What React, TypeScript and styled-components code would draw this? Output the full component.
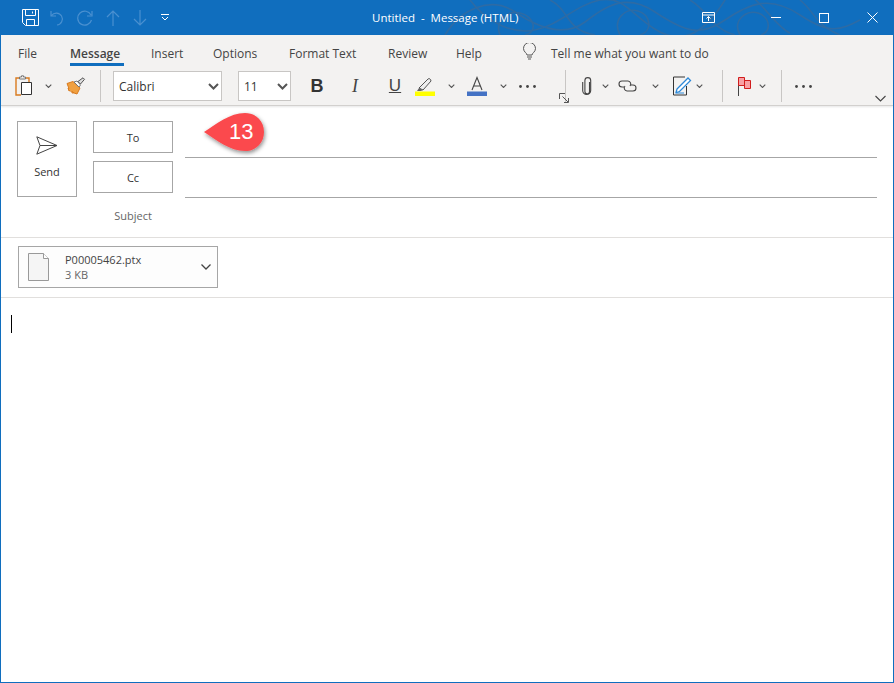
import styled, { createGlobalStyle } from "styled-components";

const Global = createGlobalStyle`
  html, body { margin: 0; padding: 0; background: #fff; }
  body { font-family: "Open Sans", "Noto Sans", "Liberation Sans", sans-serif; }
`;

const Win = styled.div`
  width: 894px;
  height: 683px;
  box-sizing: border-box;
  border: 1px solid #106ebe;
  border-top: 0;
  display: flex;
  flex-direction: column;
  position: relative;
  overflow: hidden;
  background: #fff;
`;

const TitleBar = styled.div`
  height: 35px;
  flex: none;
  margin: 0 -1px;
  background: #106ebe;
  display: flex;
  align-items: center;
  position: relative;
  color: #fff;
`;

const Quick = styled.div`
  display: flex;
  align-items: center;
  padding-left: 22px;
  gap: 11px;
`;

const TitleText = styled.div`
  position: absolute;
  left: 372px;
  top: 10px;
  font-size: 11.5px;
  line-height: 16px;
  white-space: pre;
`;

const Controls = styled.div`
  margin-left: auto;
  display: flex;
  align-items: center;
  padding-right: 16px;
  gap: 25px;
  position: relative;
`;

const Pattern = styled.svg`
  position: absolute;
  left: 440px;
  top: 0;
`;

const Ribbon = styled.div`
  height: 70px;
  flex: none;
  background: #f3f2f1;
  border-bottom: 1px solid #d2d0ce;
  box-shadow: 0 1px 2px rgba(0, 0, 0, 0.1);
  position: relative;
  display: flex;
  flex-direction: column;
`;

const Tabs = styled.div`
  height: 33px;
  flex: none;
  display: flex;
  align-items: center;
  padding-left: 17px;
  font-size: 12px;
  color: #444;
`;

const Tab = styled.div<{ $w: number; $active?: boolean }>`
  width: ${(p) => p.$w}px;
  height: 28px;
  line-height: 31px;
  white-space: nowrap;
  position: relative;
  font-weight: ${(p) => (p.$active ? 600 : 400)};
  ${(p) =>
    p.$active &&
    `&::after {
      content: "";
      position: absolute;
      left: 0;
      top: 25px;
      width: 54px;
      height: 3px;
      background: #106ebe;
    }`}
`;

const Tools = styled.div`
  height: 36px;
  display: flex;
  align-items: center;
`;

const Slot = styled.div<{ $w: number }>`
  width: ${(p) => p.$w}px;
  flex: none;
  height: 32px;
  display: flex;
  align-items: center;
  justify-content: center;
`;

const Sep = styled.div`
  width: 1px;
  height: 32px;
  flex: none;
  background: #c8c6c4;
`;

const Select = styled.div<{ $w: number }>`
  width: ${(p) => p.$w}px;
  height: 30px;
  box-sizing: border-box;
  flex: none;
  background: #fff;
  border: 1px solid #c8c6c4;
  display: flex;
  align-items: center;
  justify-content: space-between;
  padding: 0 2px 0 5px;
  font-size: 12px;
  color: #333;
`;

const Launcher = styled.svg`
  position: absolute;
  left: 558px;
  top: 58px;
`;

const Collapse = styled.svg`
  position: absolute;
  left: 874px;
  top: 60px;
`;

const Header = styled.div`
  height: 132px;
  flex: none;
  box-sizing: border-box;
  border-bottom: 1px solid #e1dfdd;
  padding: 15px 16px 0 16px;
  display: flex;
`;

const SendBtn = styled.div`
  width: 60px;
  height: 76px;
  flex: none;
  box-sizing: border-box;
  border: 1px solid #a6a6a6;
  display: flex;
  flex-direction: column;
  align-items: center;
  padding-top: 14px;
  gap: 9px;
  font-size: 11px;
  color: #333;
`;

const AddrCol = styled.div`
  width: 80px;
  flex: none;
  margin-left: 16px;
  display: flex;
  flex-direction: column;
  gap: 8px;
`;

const AddrBtn = styled.div`
  height: 32px;
  box-sizing: border-box;
  border: 1px solid #a6a6a6;
  display: flex;
  align-items: center;
  justify-content: center;
  font-size: 11px;
  color: #333;
`;

const SubjectLabel = styled.div`
  text-align: center;
  font-size: 11px;
  line-height: 16px;
  color: #666;
  margin-top: 7px;
`;

const Fields = styled.div`
  flex: 1;
  margin-left: 12px;
`;

const Field = styled.div`
  height: 40px;
  margin-top: 0;
  box-sizing: border-box;
  border-bottom: 1px solid #a6a6a6;
  &:first-child {
    height: 37px;
  }
`;

const AttachRow = styled.div`
  height: 60px;
  flex: none;
  box-sizing: border-box;
  border-bottom: 1px solid #e1dfdd;
  padding: 8px 0 0 17px;
`;

const Attachment = styled.div`
  width: 200px;
  height: 42px;
  box-sizing: border-box;
  border: 1px solid #a6a6a6;
  background: #fdfdfd;
  display: flex;
  align-items: center;
  padding: 0 6px 0 9px;
`;

const AttachInfo = styled.div`
  margin-left: 16px;
  flex: 1;
  font-size: 11px;
  line-height: 15px;
  color: #444;
`;

const AttachSize = styled.div`
  color: #666;
`;

const Body = styled.div`
  flex: 1;
  padding: 17px 0 0 10px;
`;

const Caret = styled.div`
  width: 1px;
  height: 18px;
  background: #000;
`;

const Callout = styled.div`
  position: absolute;
  left: 201px;
  top: 111px;
  width: 68px;
  height: 46px;
`;

const CalloutText = styled.div`
  position: absolute;
  left: 27px;
  top: 7px;
  font-family: "Liberation Sans", Arial, sans-serif;
  font-size: 22px;
  line-height: 28px;
  color: #fff;
`;

const Chev = ({ s = 7, c = "#555", w = 1.1 }: { s?: number; c?: string; w?: number }) => (
  <svg width={s} height={s * 0.6} viewBox="0 0 10 6">
    <path d="M1 1l4 4 4-4" fill="none" stroke={c} strokeWidth={(w * 10) / s} />
  </svg>
);

const BoldChev = () => (
  <svg width="11" height="7" viewBox="0 0 11 7">
    <path d="M1 1l4.5 4.5L10 1" fill="none" stroke="#555" strokeWidth="2" />
  </svg>
);

const Dots = () => (
  <svg width="17" height="3" viewBox="0 0 17 3">
    <circle cx="1.5" cy="1.5" r="1.4" fill="#444" />
    <circle cx="8.5" cy="1.5" r="1.4" fill="#444" />
    <circle cx="15.5" cy="1.5" r="1.4" fill="#444" />
  </svg>
);

const Save = () => (
  <svg width="17" height="17" viewBox="0 0 17 17" fill="none" stroke="#fff" strokeWidth="1">
    <path d="M.5.5h16v16H3.5l-3-3z" />
    <path d="M3.5.5v6h10v-6M4.5 16.5v-6h8v6M10.5 2.5v2" />
  </svg>
);

const Faded = "#4a90d0";

const Paste = () => (
  <svg width="20" height="22" viewBox="0 0 20 22" fill="none">
    <path d="M5 3H1v17h5" stroke="#d97b1f" strokeWidth="1.4" />
    <path d="M10 3h4v4" stroke="#d97b1f" strokeWidth="1.4" />
    <path d="M4.5 4V2h2V.8h2V2h2v2z" fill="#f3f2f1" stroke="#777" />
    <path d="M6.5 7.5h10v12h-10z" fill="#fff" stroke="#333" />
  </svg>
);

const Brush = () => (
  <svg width="20" height="18" viewBox="0 0 20 18" fill="none">
    <path d="M1 6.500l6-2 7 6.500-3 6-3-1-1.500-1.500.5 2-3-3-1 .5-1-3 1 .5z" fill="#f0a040" stroke="#d97b1f" />
    <path d="M8 5l5 5 1.500-2L11 4z" fill="#fff" stroke="#777" />
    <path d="M12 4.500L17 .8l1.500 1.500L14.500 7z" fill="#ddd" stroke="#555" />
  </svg>
);

const Highlight = () => (
  <svg width="20" height="20" viewBox="0 0 20 20" fill="none">
    <path d="M4 12L13 3c1-1 3 0 3 2l-8 9z" fill="#eee" stroke="#555" />
    <path d="M4 12l4 2-2 1H2z" fill="#666" />
    <rect x="0" y="15.500" width="20" height="4.500" fill="#ffff00" />
  </svg>
);

const Clip = () => (
  <svg width="10" height="19" viewBox="0 0 10 19" fill="none" stroke="#444" strokeWidth="1.1">
    <path d="M7.500 5v9.500a2.300 2.300 0 0 1-4.600 0V3.500a2.900 2.900 0 0 1 5.800 0v10a4 4 0 0 1-8 0V5" />
  </svg>
);

const Link = () => (
  <svg width="19" height="12" viewBox="0 0 19 12" fill="none" stroke="#444" strokeWidth="1.1">
    <path d="M6 7H4a3 3 0 0 1 0-6h6a3 3 0 0 1 2 5" />
    <path d="M13 5h2a3 3 0 0 1 0 6H9a3 3 0 0 1-2-5" />
  </svg>
);

const Sign = () => (
  <svg width="19" height="20" viewBox="0 0 19 20" fill="none">
    <path d="M12 1H.5v18h13v-9" stroke="#333" />
    <path d="M4 13L15 2l2.500 2.500L6.500 15.500 3 16.500z" fill="#fff" stroke="#2b88d8" strokeWidth="1.3" />
    <path d="M3 17h8" stroke="#2b88d8" />
  </svg>
);

const Flag = () => (
  <svg width="14" height="19" viewBox="0 0 14 19" fill="none">
    <path d="M.5 1v18" stroke="#444" />
    <path d="M.5.500h6v8h-6z" fill="#f8a0a4" stroke="#d01c1c" />
    <path d="M6.500 3.500h6v8h-6z" fill="#f8a0a4" stroke="#d01c1c" />
  </svg>
);

const Bulb = () => (
  <svg width="13" height="17" viewBox="0 0 13 17" fill="none" stroke="#555" strokeWidth="1">
    <path d="M4 12c0-2-3.500-3-3.500-6.500a6 6 0 0 1 12 0C12.500 9 9 10 9 12z" />
    <path d="M4 14h5M5 16h3" />
  </svg>
);

const tabs: [string, number, boolean?][] = [
  ["File", 52],
  ["Message", 81, true],
  ["Insert", 62],
  ["Options", 76],
  ["Format Text", 99],
  ["Review", 68],
  ["Help", 67],
];

export default function App() {
  return (
    <Win>
      <Global />
      <TitleBar>
        <Pattern width="430" height="35" viewBox="0 0 430 35" fill="none" stroke="#2d6ba5" strokeWidth="1.600">
          <path d="M5 35C20 10 50 -5 75 12s50 25 70 10 40-30 70-10 45 25 70 8 45-25 75-5 40 15 60 5" />
          <path d="M30 0c15 20 40 35 65 30s40-25 65-30 35 20 60 32 45 0 65-32 45 25 65 33" />
          <path d="M60 35c-5-12 5-25 20-22s18 20 5 22M180 35c-8-15 5-28 18-24s15 20 2 24M300 35c-8-14 6-26 18-22s14 18 3 22" />
          <path d="M110 0c20 10 15 30 45 35M250 0c20 12 20 28 45 35M360 0c15 12 15 25 40 35" />
        </Pattern>
        <Quick>
          <Save />
          <svg width="16" height="16" viewBox="0 0 16 16" fill="none" stroke={Faded} strokeWidth="1.200">
            <path d="M1 1v5h5M1.500 5.500A6 6 0 1 1 7 15" />
          </svg>
          <svg width="16" height="16" viewBox="0 0 16 16" fill="none" stroke={Faded} strokeWidth="1.200">
            <path d="M15 1v5h-5M14 5A7 7 0 1 0 14.500 10" />
          </svg>
          <svg width="14" height="16" viewBox="0 0 14 16" fill="none" stroke={Faded} strokeWidth="1.200" style={{ marginLeft: 2 }}>
            <path d="M7 16V1M1 7l6-6 6 6" />
          </svg>
          <svg width="14" height="16" viewBox="0 0 14 16" fill="none" stroke={Faded} strokeWidth="1.200" style={{ marginLeft: 2 }}>
            <path d="M7 0v15M1 9l6 6 6-6" />
          </svg>
          <svg width="8" height="7" viewBox="0 0 8 7" fill="none" stroke="#fff" strokeWidth="1" style={{ marginLeft: 3 }}>
            <path d="M0 .5h8M1 3l3 3 3-3" />
          </svg>
        </Quick>
        <TitleText>{"Untitled  -  Message (HTML)"}</TitleText>
        <Controls>
          <svg width="13" height="11" viewBox="0 0 13 11" fill="none" stroke="#fff" strokeWidth="1">
            <path d="M.5.500h12v10H.5zM.5 3h12M6.500 9V4.500M4.500 6.500l2-2 2 2" />
          </svg>
          <svg width="10" height="1" style={{ marginLeft: 31 }}>
            <rect width="10" height="1" fill="#fff" />
          </svg>
          <svg width="10" height="10" viewBox="0 0 10 10" fill="none" stroke="#fff" style={{ marginLeft: 13 }}>
            <rect x=".5" y=".5" width="9" height="9" />
          </svg>
          <svg width="11" height="11" viewBox="0 0 11 11" fill="none" stroke="#fff" style={{ marginLeft: 13 }}>
            <path d="M.5.500l10 10M10.500.500l-10 10" />
          </svg>
        </Controls>
      </TitleBar>
      <Ribbon>
        <Tabs>
          {tabs.map(([label, w, active]) => (
            <Tab key={label} $w={w} $active={active}>
              {label}
            </Tab>
          ))}
          <Slot $w={13}>
            <Bulb />
          </Slot>
          <Tab $w={180} style={{ marginLeft: 15 }}>
            Tell me what you want to do
          </Tab>
        </Tabs>
        <Tools>
          <Slot $w={14} />
          <Slot $w={20}>
            <Paste />
          </Slot>
          <Slot $w={27}>
            <Chev />
          </Slot>
          <Slot $w={28}>
            <Brush />
          </Slot>
          <Slot $w={10} />
          <Sep />
          <Slot $w={12} />
          <Select $w={109}>
            Calibri
            <BoldChev />
          </Select>
          <Slot $w={16} />
          <Select $w={53}>
            11
            <BoldChev />
          </Select>
          <Slot $w={20} />
          <Slot $w={12}>
            <b style={{ fontSize: 18, color: "#333", fontFamily: "Liberation Sans" }}>B</b>
          </Slot>
          <Slot $w={26} />
          <Slot $w={12}>
            <i style={{ fontSize: 18, color: "#444", fontFamily: "Liberation Serif" }}>I</i>
          </Slot>
          <Slot $w={28} />
          <Slot $w={12}>
            <u style={{ fontSize: 17, color: "#444", fontFamily: "Liberation Sans" }}>U</u>
          </Slot>
          <Slot $w={14} />
          <Slot $w={20}>
            <Highlight />
          </Slot>
          <Slot $w={32}>
            <Chev />
          </Slot>
          <Slot $w={20}>
            <svg width="20" height="20" viewBox="0 0 20 20" fill="none">
              <path d="M5 14L10 1.500 15 14M6.800 10h6.400" stroke="#444" strokeWidth="1.100" />
              <rect y="15.500" width="20" height="4.500" fill="#4472c4" />
            </svg>
          </Slot>
          <Slot $w={32}>
            <Chev />
          </Slot>
          <Slot $w={17}>
            <Dots />
          </Slot>
          <Slot $w={29} />
          <Sep />
          <Slot $w={16} />
          <Slot $w={10}>
            <Clip />
          </Slot>
          <Slot $w={26}>
            <Chev />
          </Slot>
          <Slot $w={19}>
            <Link />
          </Slot>
          <Slot $w={36}>
            <Chev />
          </Slot>
          <Slot $w={19}>
            <Sign />
          </Slot>
          <Slot $w={15}>
            <Chev />
          </Slot>
          <Slot $w={15} />
          <Sep />
          <Slot $w={15} />
          <Slot $w={14}>
            <Flag />
          </Slot>
          <Slot $w={20}>
            <Chev />
          </Slot>
          <Slot $w={9} />
          <Sep />
          <Slot $w={13} />
          <Slot $w={17}>
            <Dots />
          </Slot>
        </Tools>
        <Launcher width="10" height="10" viewBox="0 0 10 10" fill="none" stroke="#555">
          <path d="M.5 6V.5H6M3.500 3.500L9 9M9.500 5v4.500H5" />
        </Launcher>
        <Collapse width="11" height="7" viewBox="0 0 11 7" fill="none" stroke="#444" strokeWidth="1.100">
          <path d="M.5 1l5 5 5-5" />
        </Collapse>
      </Ribbon>
      <Header>
        <SendBtn>
          <svg width="22" height="19" viewBox="0 0 22 19" fill="none" stroke="#444" strokeWidth="1">
            <path d="M.8.800L21 9.500.8 18.200 4 9.500zM4 9.500h17" />
          </svg>
          Send
        </SendBtn>
        <AddrCol>
          <AddrBtn>To</AddrBtn>
          <AddrBtn>Cc</AddrBtn>
          <SubjectLabel>Subject</SubjectLabel>
        </AddrCol>
        <Fields>
          <Field />
          <Field />
        </Fields>
      </Header>
      <AttachRow>
        <Attachment>
          <svg width="21" height="28" viewBox="0 0 21 28" fill="#f5f5f5" stroke="#999">
            <path d="M.5.500h15l5 5v22H.5z" />
            <path d="M15.500.500v5h5" fill="#fff" />
          </svg>
          <AttachInfo>
            P00005462.ptx
            <AttachSize>3 KB</AttachSize>
          </AttachInfo>
          <BoldChevThin />
        </Attachment>
      </AttachRow>
      <Body>
        <Caret />
      </Body>
      <Callout>
        <svg width="68" height="46" viewBox="0 0 68 46">
          <defs>
            <filter id="sh" x="-20%" y="-20%" width="140%" height="150%">
              <feDropShadow dx="1" dy="2" stdDeviation="2" floodColor="#000" floodOpacity="0.45" />
            </filter>
          </defs>
          <path
            d="M2 21C14 13 28 2 43 2c11 0 19 8 19 19s-8 19-19 19C28 40 14 29 2 21z"
            fill="#fb4a4d"
            filter="url(#sh)"
          />
        </svg>
        <CalloutText>13</CalloutText>
      </Callout>
    </Win>
  );
}

function BoldChevThin() {
  return (
    <svg width="10" height="6" viewBox="0 0 10 6" fill="none" stroke="#444" strokeWidth="1.300">
      <path d="M.5.500L5 5 9.500.500" />
    </svg>
  );
}
